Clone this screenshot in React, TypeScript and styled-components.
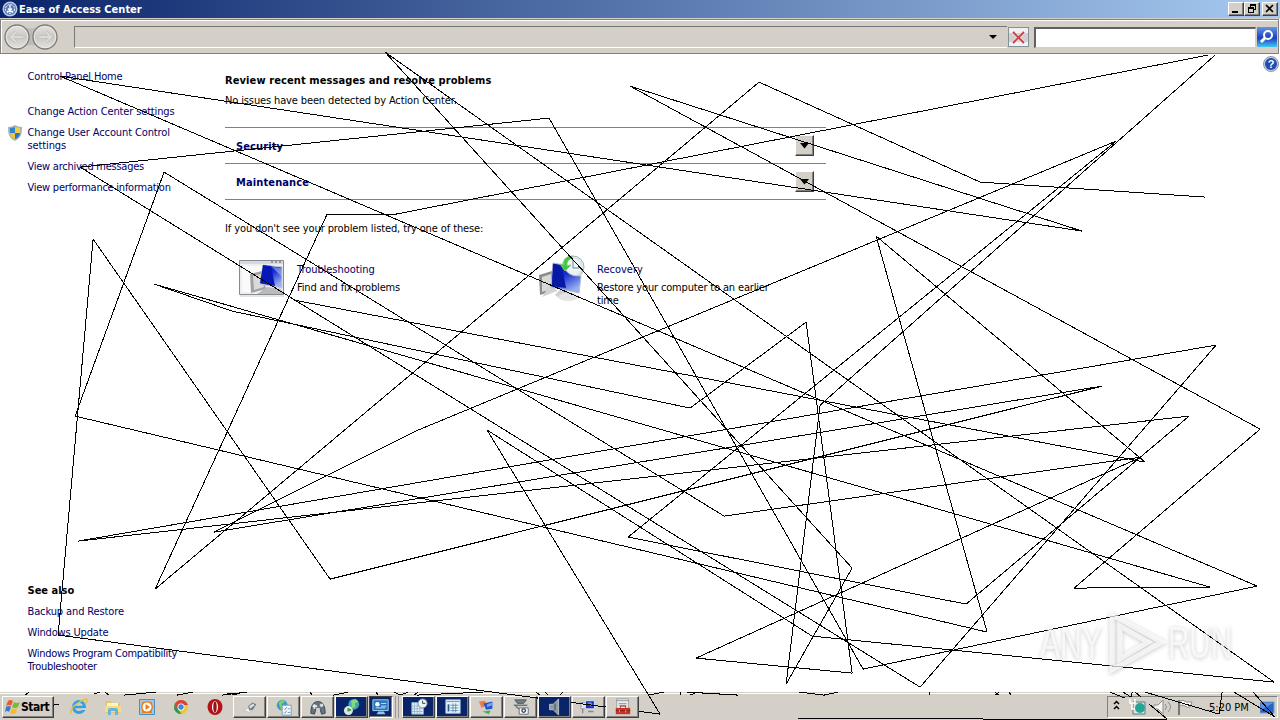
import React from "react";
import styled, { createGlobalStyle, css } from "styled-components";

const strokes = [
  "294,300 1145,462 876,236 987,632 75,416 164,172 724,516 1141,457 696,658 852,673 806,322 690,408 232,311 154,284 1210,587 1074,588 1260,429 630,86 1082,231 60,76 1257,586 863,669 549,118 80,167 920,687 1216,345 78,541 1189,416 966,604 628,537 1116,141 418,430 214,532 1102,386 330,579 93,239 58,635 660,714 487,430 812,636 1274,682 385,52 852,568 786,684 820,405 1215,55",
  "1208,55 396,214 327,214 155,589 759,82 980,182 1205,197",
  "798,718 983,718",
  "983,719 1167,719 1149,704",
  "1145,692 1219,714 1222,692",
  "1234,692 1275,717 1253,692",
  "1110,692 1125,698",
  "1123,692 1131,697 1132,692",
  "1135,692 1141,697",
  "25,695 29,692",
  "94,694 100,692",
  "105,692 109,695",
  "124,695 156,692",
  "177,695 193,692",
  "222,695 247,692",
  "227,693 237,695",
  "310,692 312,695",
  "53,705 59,704",
  "333,695 348,692",
  "376,692 378,695",
  "394,692 400,695 408,692",
  "414,695 418,692",
  "417,695 483,692",
  "536,692 540,695",
  "545,692 548,695",
  "560,695 563,692",
  "648,695 664,692",
  "680,692 680,695",
  "687,692 738,695",
  "690,695 697,692",
  "799,692 824,695 838,692",
  "929,692 929,695",
  "995,692 999,695",
  "995,695 999,692",
  "1009,692 1011,695",
];

const App: React.FC = () => {
  return (
    <Desktop>
      <GlobalStyle />
      <TitleBar>
        <AccessIcon />
        <Title>Ease of Access Center</Title>
        <WindowButton>
          <svg width="14" height="12">
            <path d="M3 9h6" stroke="#000" strokeWidth="2" />
          </svg>
        </WindowButton>
        <WindowButton>
          <svg width="14" height="12" fill="none" stroke="#000" shapeRendering="crispEdges">
            <path d="M5.500 4V1.500h5v5H9M5 2.500h6" />
            <path d="M3.500 4.500h5v5h-5zM3 5.500h6" />
          </svg>
        </WindowButton>
        <WindowButton $gap>
          <svg width="14" height="12">
            <path d="M3 2l7 7M10 2L3 9" stroke="#000" strokeWidth="1.700" />
          </svg>
        </WindowButton>
      </TitleBar>

      <Toolbar>
        <NavButtons />
        <AddressBar>
          <svg width="8" height="4">
            <path d="M0 0h8L4 4z" />
          </svg>
        </AddressBar>
        <StopButton>
          <svg width="19" height="18">
            <path d="M0 5h19v9H0z" fill="#b9b9b9" opacity=".6" />
            <path
              d="M4 4l11 11M15 4L4 15"
              stroke="#f5dada"
              strokeWidth="3.500"
            />
            <path d="M4 4l11 11M15 4L4 15" stroke="#c0444c" strokeWidth="1.800" />
          </svg>
        </StopButton>
        <SearchInput />
        <SearchButton>
          <svg width="20" height="20" fill="none">
            <path d="M8 11l-4 4" stroke="#fff" strokeWidth="3" />
            <circle cx="11" cy="8" r="4" stroke="#fff" strokeWidth="2" />
          </svg>
        </SearchButton>
      </Toolbar>

      <Content>
        <Sidebar>
          <Link $spacing={-0.16}>Control Panel Home</Link>
          <Tasks>
            <Link $spacing={-0.14}>Change Action Center settings</Link>
            <Link $spacing={-0.12}>
              <Shield />
              Change User Account Control
              <br />
              settings
            </Link>
            <Link $spacing={-0.25}>View archived messages</Link>
            <Link $spacing={-0.25}>View performance information</Link>
          </Tasks>
          <SeeAlso>
            <Heading>See also</Heading>
            <Link $spacing={-0.12}>Backup and Restore</Link>
            <Link $spacing={-0.16}>Windows Update</Link>
            <Link $spacing={-0.29}>
              Windows Program Compatibility
              <br />
              Troubleshooter
            </Link>
          </SeeAlso>
        </Sidebar>

        <Main>
          <Heading $spacing={0.1}>
            Review recent messages and resolve problems
          </Heading>
          <Message>No issues have been detected by Action Center.</Message>
          <Sections>
            {["Security", "Maintenance"].map((name) => (
              <Section key={name}>
                <span>{name}</span>
                <ExpandButton>
                  <svg width="9" height="6">
                    <path d="M0 0h9L4.500 5.500z" />
                  </svg>
                </ExpandButton>
              </Section>
            ))}
          </Sections>
          <Hint>If you don't see your problem listed, try one of these:</Hint>
          <Options>
            <Option>
              <TroubleshootIcon />
              <div>
                <Link $spacing={-0.05}>Troubleshooting</Link>
                <Description>Find and fix problems</Description>
              </div>
            </Option>
            <Option>
              <RecoveryIcon />
              <div>
                <Link>Recovery</Link>
                <Description>
                  Restore your computer to an earlier
                  <br />
                  time
                </Description>
              </div>
            </Option>
          </Options>
        </Main>
        <HelpIcon />
      </Content>

      <Taskbar>
        <StartButton>
          <WindowsFlag />
          Start
        </StartButton>
        <QuickLaunch>
          <IeIcon />
          <FolderIcon />
          <PlayerIcon />
          <ChromeIcon />
          <OperaIcon />
        </QuickLaunch>
        <TaskList>
          <TaskButton>
            <svg width="20" height="20">
              <path d="M3 14l6 2 5-3-5-3z" fill="#f4f4f4" stroke="#bbb" />
              <path d="M8 9l5-4 4 2-4 6-4 1z" fill="#707684" />
              <path d="M9 9l5-3 1 2-5 4z" fill="#dde1e6" />
            </svg>
          </TaskButton>
          <TaskButton>
            <svg width="20" height="20">
              <circle cx="8" cy="8" r="6" fill="#3c9cc4" />
              <path d="M4 5l4-3 3 2-4 3 3 4-3 3z" fill="#7ed263" />
              <path d="M8 8h10v11H8z" fill="#f8fbff" stroke="#7895ae" />
              <path
                d="M10 12l1 1 2-3M10 16l1 1 2-3M14 12h3M14 16h3"
                fill="none"
                stroke="#508dbd"
              />
            </svg>
          </TaskButton>
          <TaskButton>
            <svg width="20" height="20">
              <path
                d="M2 17C2 8 5 4 10 4s8 4 8 13l-4 1-2-6H8l-2 6z"
                fill="#67727d"
                stroke="#384550"
              />
              <path d="M6 7v5M4 9h5" stroke="#eee" strokeWidth="2" />
              <circle cx="14" cy="8" r="2" fill="#d6dce1" />
              <path d="M8 11h4v4H8z" fill="#cbd1d7" />
            </svg>
          </TaskButton>
          <TaskButton $navy>
            <svg width="20" height="20">
              <circle cx="12" cy="7" r="6" fill="#39a7b7" />
              <path d="M9 3l5-2 3 3-4 2 1 4-4 1z" fill="#8bd678" />
              <circle cx="6" cy="14" r="5" fill="#dde7e5" />
              <path d="M6 11v3l3-1" fill="none" stroke="#3b9a4a" strokeWidth="2" />
            </svg>
          </TaskButton>
          <TaskButton $pressed>
            <svg width="20" height="18">
              <path d="M1 1h17v12H1z" fill="#2671b9" stroke="#b9e0f8" />
              <circle cx="6" cy="6" r="2.500" fill="#fff" />
              <path d="M10 5h6M10 8h6M4 10h11" stroke="#d6eefb" />
              <path d="M7 14h6l2 3H5z" fill="#8ccbed" />
            </svg>
          </TaskButton>
          <Grip />
          <TaskButton $navy>
            <svg width="20" height="20">
              <path d="M2 5h13v13H2z" fill="#e8f2f7" stroke="#7ba6c0" />
              <path
                d="M2 9h13M2 12h13M2 15h13M5 5v13M8 5v13M11 5v13"
                stroke="#94b6c8"
              />
              <circle cx="14" cy="6" r="5" fill="#eef3f8" stroke="#768ca3" />
              <path d="M14 3v3h3" fill="none" stroke="#333" />
            </svg>
          </TaskButton>
          <TaskButton $navy>
            <svg width="20" height="20">
              <path d="M2 2h16v15H2z" fill="#f0f5fa" stroke="#8cb8d7" />
              <path d="M3 4h14M7 8h9M7 11h9M7 14h9M10 6v10M13 6v10" stroke="#568eb9" />
              <path d="M4 7h2v8H4z" fill="#315b87" />
            </svg>
          </TaskButton>
          <TaskButton>
            <svg width="20" height="20">
              <path d="M1 4l7-1 1 5-5 3z" fill="#f17a42" />
              <path d="M6 6l10-2v8l-7 1z" fill="#2456ce" />
              <path d="M10 7l6-2v3l-6 2z" fill="#75a5f0" />
              <path d="M5 15l9-1-2 4z" fill="#3fb44c" />
            </svg>
          </TaskButton>
          <TaskButton>
            <svg width="20" height="20" fill="none">
              <path d="M3 2h13l-3 4H6z" fill="#737e84" stroke="#4f5a60" />
              <path d="M2 8h15M4 9l5 4" stroke="#687780" strokeWidth="1.500" />
              <path d="M8 11h10v7H8z" fill="#fff" stroke="#566977" />
              <circle cx="13" cy="14" r="2" stroke="#324654" strokeWidth="1.500" />
            </svg>
          </TaskButton>
          <TaskButton $navy $front>
            <svg width="20" height="20">
              <path d="M4 7h4l6-6v18l-6-6H4z" fill="#8d9aa5" stroke="#bfc7cd" />
              <path d="M10 6v8" stroke="#64717c" strokeWidth="2" />
            </svg>
          </TaskButton>
          <TaskButton>
            <svg width="20" height="20">
              <path d="M1 5h7v7H1z" fill="#e0e8ef" stroke="#8e9caa" />
              <path d="M6 3h10v9H6z" fill="#1838b9" stroke="#e8ebee" />
              <path d="M8 5h5v5z" fill="#8195f2" />
              <path d="M3 12v5M9 15h6" stroke="#888" strokeWidth="1.500" />
            </svg>
          </TaskButton>
          <TaskButton $front>
            <svg width="20" height="20">
              <path d="M3 1h13v11H3z" fill="#f5f5f5" stroke="#999" />
              <path d="M3 3h13M5 6h9M5 8h9" stroke="#848c91" />
              <path d="M2 11h16v7H2z" fill="#c93129" />
              <path d="M7 11V9h6v2M2 14h16" fill="none" stroke="#852019" />
              <path d="M6 13v3M13 13v3" stroke="#e99" />
            </svg>
          </TaskButton>
        </TaskList>
        <Tray>
          <TrayIcons />
          <Clock>5:20 PM</Clock>
          <svg width="15" height="13">
            <path d="M0 1h14v11H0z" fill="#2863c4" stroke="#7298d2" />
            <path d="M1 2h12L1 9z" fill="#5d92e2" />
          </svg>
        </Tray>
      </Taskbar>

      <Scribble width="1280" height="720" shapeRendering="crispEdges">
        <g transform="translate(.1 .1)">
          {strokes.map((points) => (
            <polyline key={points} points={points} />
          ))}
        </g>
      </Scribble>
      <Watermark />
    </Desktop>
  );
};

const AccessIcon = () => (
  <svg width="16" height="16">
    <circle cx="8" cy="8" r="7.500" fill="#b8cce8" />
    <circle cx="8" cy="8" r="6" fill="#5577b8" />
    <circle cx="8" cy="8" r="4.500" fill="none" stroke="#fff" strokeDasharray="2 1" />
    <path d="M8 4v5M6 7.500l2 2 2-2M5 10.500h6" fill="none" stroke="#fff" strokeWidth="1.300" />
  </svg>
);

const NavButtons = () => (
  <svg width="56" height="28" fill="none">
    <defs>
      <linearGradient id="nav" x2="0" y2="1">
        <stop stopColor="#e4e3e1" />
        <stop offset=".5" stopColor="#cac8c5" />
        <stop offset="1" stopColor="#e3e2df" />
      </linearGradient>
    </defs>
    <path d="M14 3q14 5 28 0v22q-14-6-28 0z" fill="#bdbbb7" />
    <circle cx="14" cy="14" r="12" fill="url(#nav)" stroke="#7d7c79" strokeWidth="1.300" />
    <circle cx="42" cy="14" r="12" fill="url(#nav)" stroke="#7d7c79" strokeWidth="1.300" />
    <circle cx="14" cy="14" r="10.700" stroke="#e9e9e7" />
    <circle cx="42" cy="14" r="10.700" stroke="#e9e9e7" />
    <path
      d="M20 14H9M13 9l-5 5 5 5M36 14h11M43 9l5 5-5 5"
      stroke="#c2c0bc"
      strokeWidth="3.500"
    />
    <path
      d="M20 14H9M13 9l-5 5 5 5M36 14h11M43 9l5 5-5 5"
      stroke="#dbdad7"
      strokeWidth="2"
    />
  </svg>
);

const Shield = () => (
  <ShieldSvg width="14" height="16">
    <path d="M7 0q3 2 7 2c0 7-1 11-7 14C1 13 0 9 0 2q4 0 7-2z" fill="#a9b3b8" />
    <path d="M7 2v6H2V3q3 0 5-1z" fill="#3284cf" />
    <path d="M7 2q2 1 5 1v5H7z" fill="#f2cf3b" />
    <path d="M2 8h5v6q-5-2-5-6z" fill="#f0c52f" />
    <path d="M7 8h5q0 4-5 6z" fill="#2c76c3" />
  </ShieldSvg>
);

const TroubleshootIcon = () => (
  <svg width="46" height="38">
    <defs>
      <linearGradient id="screen" x2=".6" y2="1">
        <stop stopColor="#0615a1" />
        <stop offset=".5" stopColor="#1730d2" />
        <stop offset="1" stopColor="#9bb0f0" />
      </linearGradient>
    </defs>
    <path d="M.5 1.500h44v34H.5z" fill="#eceef0" stroke="#878b91" />
    <path d="M1 2h43v3H1z" fill="#d5d8dc" />
    <path d="M1 37h44" stroke="#ccc" />
    <path d="M32 3h2M36 3h2M40 3h2" stroke="#555" />
    <path d="M3 7h22v26H3z" fill="#fafafa" />
    <path d="M11 15l12-3 4 18-15 4z" fill="#a0a1a1" />
    <path d="M14 17l8-2 3 13-10 3z" fill="#dadada" />
    <path d="M24 6l19 2v21l-22-4z" fill="url(#screen)" stroke="#cacbd2" />
    <path d="M24 6l8 1 4 20-15-3z" fill="#0718b4" />
    <path d="M33 8l10 1v9z" fill="#a9b9f5" opacity=".6" />
    <path d="M28 28l14 2 2 5H18z" fill="#b8babb" />
  </svg>
);

const RecoveryIcon = () => (
  <svg width="46" height="48">
    <circle cx="34" cy="12" r="11" fill="#dce8ea" stroke="#a4b5b8" />
    <circle cx="34" cy="12" r="8" fill="#edf4f4" />
    <path d="M34 5v8h6" fill="none" stroke="#6788a0" />
    <path d="M0 20l13-4v20L1 40z" fill="#8b8c8c" />
    <path d="M3 22l9-3v15l-9 3z" fill="#d8d8d7" />
    <path d="M12 28l6 8-15 6z" fill="#d2d3d3" />
    <path d="M14 8l11 2q2 12 17 11l-2 17-28-6z" fill="url(#screen)" stroke="#b8bdc7" />
    <path d="M14 9l9 3 4 21-14-2z" fill="#0718a4" />
    <path d="M21 35l12 3 7 3q-5 6-20 2l-4-3z" fill="#cdced0" />
    <ellipse cx="29" cy="42" rx="10" ry="4" fill="#e3e4e5" />
    <path d="M33 1Q23 2 25 10l-4-1 5 7 6-6-4 1q-1-6 5-8z" fill="#41c43e" stroke="#77cc70" />
  </svg>
);

const HelpIcon = () => (
  <HelpSvg width="16" height="16">
    <circle cx="8" cy="8" r="7.500" fill="#c4cada" stroke="#8c98b4" />
    <circle cx="8" cy="8" r="6" fill="#234cad" />
    <text x="8" y="12" textAnchor="middle">
      ?
    </text>
  </HelpSvg>
);

const WindowsFlag = () => (
  <svg width="16" height="16">
    <path d="M3 2q2-2 5 0L6 7Q4 5 1 7z" fill="#ed5a2b" />
    <path d="M9 3q3 2 6 0l-2 5q-3 2-6 0z" fill="#7cb936" />
    <path d="M1 8q3-2 5 0l-2 5q-2-2-4 0z" fill="#3c79d5" />
    <path d="M7 9q2 2 5 0l-1 5q-3 2-6 0z" fill="#f4bc2d" />
  </svg>
);

const IeIcon = () => (
  <svg width="18" height="18" fill="none">
    <circle cx="9" cy="9" r="5.500" stroke="#34a0e0" strokeWidth="3" />
    <path d="M4 9h10" stroke="#34a0e0" strokeWidth="2.500" />
    <path d="M11 11h5" stroke="#d4d0c8" strokeWidth="2" />
    <path d="M1 16Q-1 11 8 5t9-3q0 2-2 4" stroke="#e6bf43" strokeWidth="1.500" />
  </svg>
);

const FolderIcon = () => (
  <svg width="18" height="18">
    <path d="M1 3h6l2 2h7v10H1z" fill="#e7c568" />
    <path d="M3 5h11v3H3z" fill="#fff4ba" />
    <path d="M1 8h16v6H1z" fill="#f2dc8f" />
    <path d="M4 17v-5q0-2 2-2h6q2 0 2 2v5h-3v-4H7v4z" fill="#66b7d7" />
  </svg>
);

const PlayerIcon = () => (
  <svg width="18" height="18">
    <path d="M1.500 1.500h15v15h-15z" fill="#9cc8eb" stroke="#4b8fc1" />
    <path d="M4 4h10v11H4z" fill="#ed811c" />
    <circle cx="9" cy="9" r="6" fill="#f07d13" />
    <circle cx="9" cy="9" r="4.500" fill="#fff" />
    <path d="M7.500 6l4.500 3-4.500 3z" fill="#f07d13" />
  </svg>
);

const ChromeIcon = () => (
  <svg width="18" height="18">
    <circle cx="9" cy="9" r="7" fill="#eac736" />
    <path d="M2.500 6Q5 2 9 2q5 0 7 5H9l-4 5z" fill="#db4437" />
    <path d="M2.500 6l4 6 3 4Q4 16 2 11z" fill="#299b55" />
    <circle cx="9" cy="9" r="3.500" fill="#fff" />
    <circle cx="9" cy="9" r="2.700" fill="#4285da" />
  </svg>
);

const OperaIcon = () => (
  <svg width="18" height="18">
    <ellipse cx="9" cy="9" rx="7.500" ry="8" fill="#b41419" />
    <ellipse cx="9" cy="9" rx="3" ry="5.800" fill="#fff" />
    <ellipse cx="9" cy="9" rx="1.700" ry="5.300" fill="#961216" />
  </svg>
);

const TrayIcons = () => (
  <svg width="88" height="20" fill="none">
    <path d="M1 7l2.500-2.500L6 7M1 12l2.500-2.500L6 12" stroke="#000" strokeWidth="1.500" />
    <path d="M20 5h12v12H20z" fill="#dce5e4" stroke="#527c7b" />
    <circle cx="27" cy="11" r="5" fill="#28a497" />
    <path d="M17 2v4h5V2M19 6v6h3" stroke="#fff" strokeWidth="1.500" />
    <path d="M41 8h4l5-5v14l-5-5h-4z" fill="#f5f5f5" stroke="#8c8c8c" />
    <path d="M52 7q3 3 0 6M55 5q5 5 0 10" stroke="#8c8c8c" />
    <path d="M66 3v15" stroke="#777" strokeWidth="2" />
    <path d="M67 4q3-2 6 1h6l-2 5q-3 1-5-1t-5 0z" fill="#fff" stroke="#8b8b8b" />
  </svg>
);

const Watermark = () => (
  <WatermarkSvg width="220" height="70">
    <text x="4" y="48" textLength="62" lengthAdjust="spacingAndGlyphs">
      ANY
    </text>
    <path d="M76 5l50 27-50 28z" />
    <path d="M84 16l28 16-28 17z" />
    <text x="132" y="48" textLength="64" lengthAdjust="spacingAndGlyphs">
      RUN
    </text>
  </WatermarkSvg>
);

const GlobalStyle = createGlobalStyle`
  body {
    margin: 0;
    overflow: hidden;
  }

  svg {
    display: block;
    flex: none;
  }
`;

const raised = css`
  border: 1px solid;
  border-color: #fff #404040 #404040 #fff;
  box-shadow: inset -1px -1px #808080;
  background: #d4d0c8;
`;

const Desktop = styled.div`
  position: relative;
  display: flex;
  flex-direction: column;
  width: 1280px;
  height: 720px;
  overflow: hidden;
  background: #fff;
  color: #000;
  font: 11px/13px "DejaVu Sans Condensed", "DejaVu Sans", sans-serif;
  font-stretch: condensed;
  white-space: nowrap;
`;

const TitleBar = styled.header`
  display: flex;
  align-items: center;
  box-sizing: border-box;
  height: 19px;
  padding: 0 2px;
  border-bottom: 1px solid #d4d0c8;
  background: linear-gradient(90deg, #0a246a, #a6caf0);
`;

const Title = styled.span`
  flex: 1;
  padding-left: 1px;
  color: #fff;
  font-weight: bold;
`;

const WindowButton = styled.div<{ $gap?: boolean }>`
  ${raised}
  width: 14px;
  height: 12px;
  margin-left: ${(props) => (props.$gap ? "2px" : "0")};
`;

const Toolbar = styled.div`
  display: flex;
  align-items: center;
  box-sizing: border-box;
  height: 35px;
  margin-right: 1px;
  padding: 1px 0 0 2px;
  border: 1px solid #808080;
  box-shadow: inset 1px 1px #fff;
  background: #d4d0c8;
`;

const AddressBar = styled.div`
  display: flex;
  align-items: center;
  justify-content: flex-end;
  box-sizing: border-box;
  width: 933px;
  height: 22px;
  margin-left: 15px;
  padding-right: 10px;
  border: solid;
  border-width: 1px 0 1px 1px;
  border-color: #777 #777 #fff;
`;

const StopButton = styled.div`
  box-sizing: border-box;
  width: 21px;
  height: 20px;
  margin-left: 1px;
  border: 1px solid #83919b;
  background: #f2f2f2;
`;

const SearchInput = styled.div`
  box-sizing: border-box;
  width: 222px;
  height: 21px;
  margin-left: 5px;
  border: solid;
  border-width: 2px 1px 1px 2px;
  border-color: #606060 #d4d0c8 #d4d0c8 #606060;
  background: #fff;
`;

const SearchButton = styled.div`
  width: 20px;
  height: 20px;
  margin-left: 1px;
  background: linear-gradient(#6795e1, #1841c4 55%, #42c7f0);
`;

const Content = styled.div`
  display: flex;
  height: 638px;
`;

const Sidebar = styled.aside`
  display: flex;
  flex-direction: column;
  box-sizing: border-box;
  width: 225px;
  padding: 16px 0 19px 27.5px;
`;

const Link = styled.div<{ $spacing?: number }>`
  position: relative;
  color: #000066;
  letter-spacing: ${(props) => props.$spacing ?? 0}px;
`;

const Tasks = styled.nav`
  display: flex;
  flex-direction: column;
  gap: 8px;
  margin-top: 22px;
`;

const SeeAlso = styled(Tasks)`
  margin-top: auto;
`;

const ShieldSvg = styled.svg`
  position: absolute;
  left: -20px;
  top: -1px;
`;

const Heading = styled.div<{ $spacing?: number }>`
  font-weight: bold;
  letter-spacing: ${(props) => props.$spacing ?? 0}px;
`;

const Main = styled.main`
  width: 601px;
  padding-top: 20px;
`;

const Message = styled.div`
  margin-top: 7px;
  letter-spacing: -0.13px;
`;

const Sections = styled.div`
  margin-top: 20px;
  border-top: 1px solid #808080;
`;

const Section = styled.div`
  display: flex;
  align-items: center;
  justify-content: space-between;
  height: 35px;
  padding: 0 12px 0 11px;
  border-bottom: 1px solid #808080;
  color: #000066;
  font-weight: bold;
  letter-spacing: 0.12px;

  span {
    padding-top: 2px;
  }
`;

const ExpandButton = styled.div`
  ${raised}
  display: flex;
  align-items: center;
  justify-content: center;
  width: 17px;
  height: 19px;
`;

const Hint = styled.div`
  margin-top: 22px;
  letter-spacing: -0.11px;
`;

const Options = styled.div`
  display: flex;
  margin-top: 20px;
`;

const Option = styled.div`
  display: flex;
  align-items: flex-start;
  gap: 12px;
  width: 286px;
  padding-left: 14px;

  > div {
    padding-top: 8px;
  }

  > svg {
    margin-top: 4px;
  }

  & + & > svg {
    margin-top: 0;
  }
`;

const Description = styled.div`
  margin-top: 5px;
  letter-spacing: -0.16px;
`;

const HelpSvg = styled.svg`
  margin: 2px 1px 0 auto;

  text {
    fill: #fff;
    font: bold 11px "Liberation Sans", sans-serif;
  }
`;

const Taskbar = styled.footer`
  display: flex;
  align-items: flex-start;
  box-sizing: border-box;
  height: 28px;
  padding: 3px 2px 0;
  border-top: 1px solid #d4d0c8;
  background: #d4d0c8;
  box-shadow: inset 0 1px #fff;
`;

const StartButton = styled.div`
  ${raised}
  display: flex;
  align-items: center;
  box-sizing: border-box;
  width: 52px;
  height: 22px;
  padding-left: 2px;
  font-size: 12px;
  font-weight: bold;
  letter-spacing: -0.5px;
`;

const QuickLaunch = styled.div`
  display: flex;
  gap: 16px;
  padding: 2px 0 0 16px;
`;

const TaskList = styled.div`
  display: flex;
  gap: 1px;
  margin-left: 9px;
`;

const TaskButton = styled.div<{
  $navy?: boolean;
  $pressed?: boolean;
  $front?: boolean;
}>`
  ${raised}
  display: flex;
  align-items: center;
  justify-content: center;
  box-sizing: border-box;
  width: ${(props) => (props.$pressed ? 24 : 33)}px;
  height: 22px;
  ${(props) =>
    (props.$navy || props.$pressed) &&
    css`
      background: #0a246a;
    `}
  ${(props) =>
    props.$pressed &&
    css`
      border-color: #404040 #fff #fff #404040;
    `}
  ${(props) =>
    props.$front &&
    css`
      position: relative;
      z-index: 2;
    `}

  svg {
    transform: scale(0.9);
  }
`;

const Grip = styled.div`
  width: 2px;
  height: 22px;
  margin: 0 2px 0 1px;
  border: solid;
  border-width: 0 1px;
  border-color: #fff #999;
`;

const Tray = styled.div`
  display: flex;
  align-items: center;
  box-sizing: border-box;
  width: 171px;
  height: 22px;
  margin-left: auto;
  padding: 0 2px 0 5px;
  border: 1px solid;
  border-color: #808080 #fff #fff #808080;
`;

const Clock = styled.span`
  flex: 1;
  padding-left: 8px;
`;

const Scribble = styled.svg`
  position: absolute;
  inset: 0;
  z-index: 1;
  pointer-events: none;

  polyline {
    fill: none;
    stroke: #000;
    stroke-linejoin: bevel;
  }
`;

const WatermarkSvg = styled.svg`
  position: absolute;
  left: 1036px;
  top: 610px;
  z-index: 3;
  overflow: visible;
  filter: drop-shadow(0 1px 2px rgba(0, 0, 0, 0.3));

  text {
    fill: #fff;
    fill-opacity: 0.7;
    font: 45px "Liberation Sans", sans-serif;
  }

  path {
    fill: none;
    stroke: #fff;
    stroke-width: 5;
    stroke-opacity: 0.7;
  }
`;

export default App;
